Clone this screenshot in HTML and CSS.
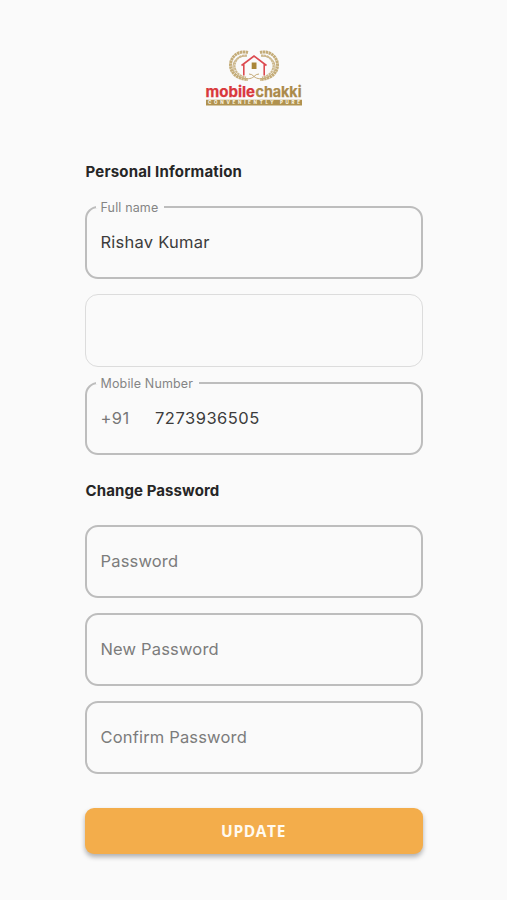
FILE: index.html
```html
<!DOCTYPE html>
<html lang="en">
<head>
<meta charset="utf-8">
<title>Personal Information</title>
<link rel="stylesheet" href="styles.css">
</head>
<body>
<main class="page">
  <svg class="logo" viewBox="203 48 102 60" role="img" aria-label="mobilechakki">
    <defs>
      <g id="wreath">
        <path class="stem" d="M247 56C237 56 232.500 61 233 68C234 77 248 82 254 76.500Q256 74 259 74"/>
        <path class="grain" d="M248 52.500C238 50 230.500 57 230.500 65C230.500 73 237 79 248 79.500"/>
        <path class="grain inner" d="M247 55.500C239 55 235 60 234.500 66C235 72 239 76 246 77.500"/>
      </g>
    </defs>
    <use href="#wreath"/>
    <use href="#wreath" transform="translate(508 0) scale(-1 1)"/>
    <path class="house" d="M241.500 65.500L254 56L266.500 65.500M243.800 64V75.500M264.200 64V75.500"/>
    <path class="window" d="M251.700 62.500h4.800v6.500h-4.800z"/>
    <text class="word red" x="205.500" y="97" textLength="49.500" lengthAdjust="spacingAndGlyphs">mobile</text>
    <text class="word gold" x="255.500" y="97" textLength="46" lengthAdjust="spacingAndGlyphs">chakki</text>
    <path class="bar" d="M206 99.800h96v5.800h-96z"/>
    <text class="tag" x="208" y="104.400" textLength="92">CONVENIENTLY PURE</text>
  </svg>

  <form class="form">
    <h2 class="heading">Personal Information</h2>
    <fieldset class="field">
      <legend class="label">Full name</legend>
      <span class="value">Rishav Kumar</span>
    </fieldset>
    <fieldset class="field disabled"></fieldset>
    <fieldset class="field">
      <legend class="label">Mobile Number</legend>
      <span class="prefix">+91</span><span class="value digits">7273936505</span>
    </fieldset>

    <h2 class="heading second">Change Password</h2>
    <fieldset class="field"><span class="hint">Password</span></fieldset>
    <fieldset class="field"><span class="hint">New Password</span></fieldset>
    <fieldset class="field"><span class="hint">Confirm Password</span></fieldset>
    <button class="update" type="button">UPDATE</button>
  </form>
</main>
</body>
</html>
```
FILE: styles.css
```css
* { box-sizing: border-box; }
body {
  margin: 0;
  background: #fafafa;
  font-family: Inter, "Liberation Sans", sans-serif;
}
.page {
  display: flex;
  flex-direction: column;
  align-items: center;
  height: 900px;
  padding-top: 48px;
}
.logo { width: 102px; height: 60px; flex: none; }
.stem { fill: none; stroke: #c4aa77; stroke-width: 1; }
.grain { fill: none; stroke: #c4ac78; stroke-width: 3; stroke-dasharray: 2.4 0.5; }
.inner { stroke-width: 2; stroke: #cdb98e; }
.house { fill: none; stroke: #dc4a50; stroke-width: 1.6; }
.window { fill: #a98638; }
.word { font-size: 14.800px; font-weight: 700; stroke-width: 0.25; }
.red { fill: #d9383c; stroke: #d9383c; }
.gold { fill: #ab8a4a; stroke: #ab8a4a; }
.bar { fill: #b0924f; }
.tag { font-size: 4.500px; font-weight: 800; fill: #f8f1df; }

.form {
  display: flex;
  flex-direction: column;
  width: 338px;
  margin-top: 53px;
}
.heading {
  margin: 0 0 25px;
  height: 20px;
  padding-left: 1px;
  font-size: 15px;
  line-height: 21px;
  font-weight: 700;
  color: #262626;
  letter-spacing: 0.18px;
}
.second { margin-top: 10px; line-height: 20px; margin-bottom: 24px; letter-spacing: 0.1px; }
.field {
  display: flex;
  width: 338px;
  height: 73px;
  min-width: 0;
  margin: 0 0 15.200px;
  padding: 0 14px;
  border: 2px solid #bdbdbd;
  border-radius: 13px;
  font-size: 16.500px;
  line-height: 68px;
  letter-spacing: 0.17px;
}
.disabled { border: 1px solid #dcdcdc; }
.label {
  height: 1px;
  margin-left: -5px;
  padding: 0 6px 0 5px;
  font-size: 12.500px;
  line-height: 1px;
  letter-spacing: 0.15px;
  color: #858585;
}
.value { color: #3c3c3c; letter-spacing: 0.25px; }
.digits { letter-spacing: 0.5px; }
.prefix { width: 54.500px; color: #777; letter-spacing: 0.4px; }
.hint { color: #7c7c7c; }
.update {
  height: 46px;
  margin-top: 19px;
  padding: 0;
  border: 0;
  border-radius: 9px;
  background: #f3ad4b;
  box-shadow: 0 3px 5px rgba(0, 0, 0, 0.3);
  color: #fffaf0;
  font: 700 15.500px/46px "Open Sans", sans-serif;
  letter-spacing: 0.6px;
}
```
